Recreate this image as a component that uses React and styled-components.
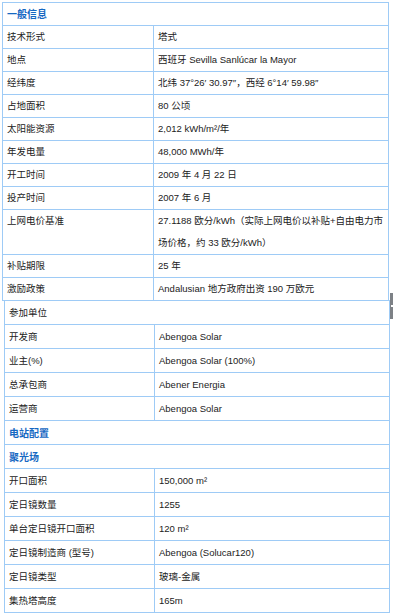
import styled, { createGlobalStyle } from "styled-components";

const GlobalStyle = createGlobalStyle`
  html, body {
    margin: 0;
    padding: 0;
    background: #ffffff;
  }
  body {
    font-family: "Liberation Sans", "Noto Sans CJK SC", sans-serif;
    font-size: 9.5px;
    color: #222222;
  }
`;

const Page = styled.div`
  position: relative;
  width: 393px;
  height: 616px;
  padding: 2px 0 0 2px;
  box-sizing: border-box;
  overflow: hidden;
`;

const Table = styled.table`
  border-collapse: collapse;
  table-layout: fixed;
  width: ${(props) => props.$width}px;
  margin-left: ${(props) => props.$indent || 0}px;
  margin-top: ${(props) => (props.$joined ? -1 : 0)}px;
  border: 1px solid #9ecbf6;
  td {
    border: 1px solid #9ecbf6;
    padding: 0 4px;
    height: ${(props) => props.$rowH}px;
    line-height: ${(props) => props.$lineH}px;
    vertical-align: top;
    white-space: nowrap;
  }
`;

const Heading = styled.td`
  color: #1668c2;
  font-weight: bold;
  font-size: 10px;
  font-family: "Noto Sans CJK SC", sans-serif;
`;

const Line = styled.div`
  white-space: nowrap;
`;

const Handle = styled.div`
  position: absolute;
  right: 0;
  top: 293px;
  width: 3px;
  height: 26px;
  background: #7d8186;
  &::after {
    content: "";
    position: absolute;
    left: 1px;
    top: 12px;
    width: 2px;
    height: 2px;
    background: #ffffff;
  }
`;

const general = [
  ["技术形式", "塔式"],
  ["地点", "西班牙 Sevilla Sanlúcar la Mayor"],
  ["经纬度", "北纬 37°26′ 30.97″，西经 6°14′ 59.98″"],
  ["占地面积", "80 公顷"],
  ["太阳能资源", "2,012 kWh/m²/年"],
  ["年发电量", "48,000 MWh/年"],
  ["开工时间", "2009 年 4 月 22 日"],
  ["投产时间", "2007 年 6 月"],
  [
    "上网电价基准",
    ["27.1188 欧分/kWh（实际上网电价以补贴+自由电力市", "场价格，约 33 欧分/kWh）"],
  ],
  ["补贴期限", "25 年"],
  ["激励政策", "Andalusian 地方政府出资 190 万欧元"],
];

const partners = [
  ["开发商", "Abengoa Solar"],
  ["业主(%)", "Abengoa Solar (100%)"],
  ["总承包商", "Abener Energia"],
  ["运营商", "Abengoa Solar"],
];

const field = [
  ["开口面积", "150,000 m²"],
  ["定日镜数量", "1255"],
  ["单台定日镜开口面积", "120 m²"],
  ["定日镜制造商 (型号)", "Abengoa (Solucar120)"],
  ["定日镜类型", "玻璃-金属"],
  ["集热塔高度", "165m"],
];

const Row = ({ label, value }) => (
  <tr>
    <td>{label}</td>
    <td>
      {Array.isArray(value) ? value.map((v) => <Line key={v}>{v}</Line>) : value}
    </td>
  </tr>
);

export default function App() {
  return (
    <Page>
      <GlobalStyle />
      <Table $width={387} $rowH={22} $lineH={22}>
        <colgroup>
          <col style={{ width: 151 }} />
          <col />
        </colgroup>
        <tbody>
          <tr>
            <Heading colSpan={2}>一般信息</Heading>
          </tr>
          {general.map(([label, value]) => (
            <Row key={label} label={label} value={value} />
          ))}
        </tbody>
      </Table>
      <Table $width={386} $indent={2} $joined $rowH={23} $lineH={23}>
        <colgroup>
          <col style={{ width: 150 }} />
          <col />
        </colgroup>
        <tbody>
          <tr>
            <td colSpan={2}>参加单位</td>
          </tr>
          {partners.map(([label, value]) => (
            <Row key={label} label={label} value={value} />
          ))}
          <tr>
            <Heading colSpan={2}>电站配置</Heading>
          </tr>
          <tr>
            <Heading colSpan={2}>聚光场</Heading>
          </tr>
          {field.map(([label, value]) => (
            <Row key={label} label={label} value={value} />
          ))}
        </tbody>
      </Table>
      <Handle />
    </Page>
  );
}
